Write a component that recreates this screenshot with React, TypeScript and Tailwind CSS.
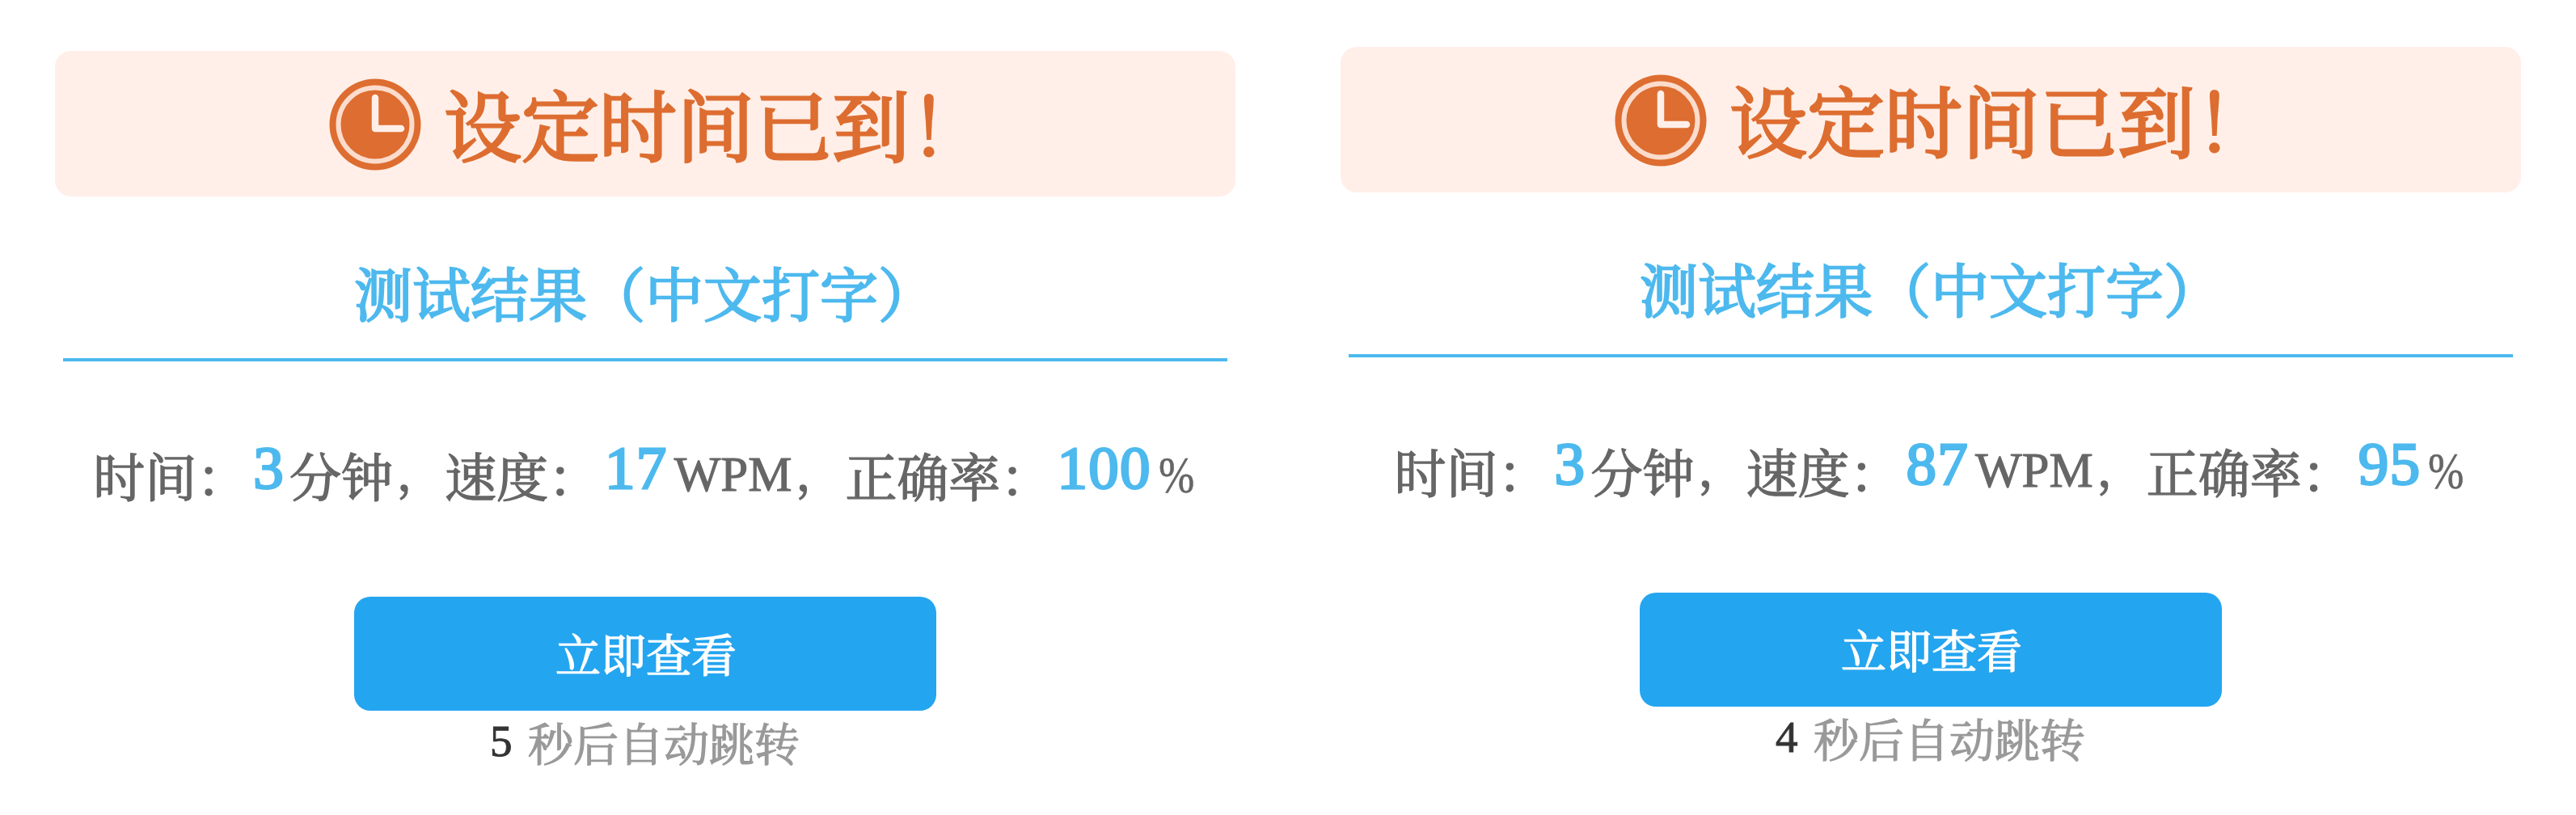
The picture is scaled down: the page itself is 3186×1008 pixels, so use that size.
type Result = {
  minutes: string;
  wpm: string;
  accuracy: string;
  countdown: string;
};

const cjk = "font-['Noto_Serif_CJK_SC','Noto_Sans_CJK_SC',sans-serif]";
const latin = "font-['Liberation_Serif',serif]";

function ClockIcon() {
  return (
    <svg viewBox="0 0 114 114" className="mt-[34px] h-[114px] w-[114px] shrink-0" fill="none">
      <circle cx="57" cy="57" r="56.5" fill="#dd6d30" />
      <circle cx="57" cy="57" r="45.5" stroke="#fbdccd" strokeWidth="6" />
      <path d="M57 24V62H89" stroke="#ffefe8" strokeWidth="8.5" strokeLinecap="round" strokeLinejoin="round" />
    </svg>
  );
}

function Label({ children }: { children: string }) {
  return (
    <span
      className={`${cjk} mt-[8px] text-[64px] leading-[64px] text-[#666] [-webkit-text-stroke:1.4px_#666]`}
    >
      {children}
    </span>
  );
}

function Comma() {
  return (
    <span
      className={`${cjk} mt-[8px] w-[64px] pl-[5px] text-[56px] leading-[56px] text-[#666] [-webkit-text-stroke:1.6px_#666]`}
    >
      ，
    </span>
  );
}

function Figure({ children }: { children: string }) {
  return (
    <span
      className={`${latin} ml-[6px] mr-[6px] mt-[-6px] text-[75px] leading-[78px] tracking-[1.3px] text-[#4db9ee] [-webkit-text-stroke:2.8px_#4db9ee]`}
    >
      {children}
    </span>
  );
}

function ResultPanel({ result, className }: { result: Result; className: string }) {
  return (
    <section className={`flex w-[1460px] shrink-0 flex-col items-center ${className}`}>
      <header className="flex h-[180px] w-full items-start rounded-[20px] bg-[#ffefe8] pl-[339px]">
        <ClockIcon />
        <h1
          className={`${cjk} ml-[28px] mt-[40px] text-[96px] leading-[96px] text-[#dd6d30] [-webkit-text-stroke:3px_#dd6d30]`}
        >
          设定时间已到！
        </h1>
      </header>

      <h2
        className={`${cjk} mt-[81px] h-[119px] w-[1440px] text-center text-[72px] leading-[72px] text-[#4db9ee] [-webkit-text-stroke:2.4px_#4db9ee]`}
      >
        测试结果（中文打字）
      </h2>
      <hr className="h-[4px] w-[1440px] border-0 bg-[#4db9ee]" />

      <div className="mt-[99px] flex h-[192px] items-start justify-center whitespace-nowrap">
        <Label>时间：</Label>
        <Figure>{result.minutes}</Figure>
        <Label>分钟</Label>
        <Comma />
        <Label>速度：</Label>
        <Figure>{result.wpm}</Figure>
        <span
          className={`${latin} ml-[2px] mt-[9px] text-[61px] leading-[64px] text-[#666] [-webkit-text-stroke:1px_#666]`}
        >
          WPM
        </span>
        <Comma />
        <span className="w-[2px]" />
        <Label>正确率：</Label>
        <Figure>{result.accuracy}</Figure>
        <span
          className={`${latin} ml-[3px] mt-[10px] w-[48px] origin-left scale-x-[0.83] text-[64px] leading-[64px] text-[#666] [-webkit-text-stroke:0.6px_#666]`}
        >
          %
        </span>
      </div>

      <button
        className={`${cjk} flex h-[141px] w-[720px] items-center justify-center rounded-[20px] bg-[#24a5f0] pb-[4px] pl-[2px] text-[56px] leading-none text-white [-webkit-text-stroke:1.4px_#fff]`}
      >
        立即查看
      </button>

      <p className="mt-[10px] flex w-[720px] items-start pl-[168px] text-[56px] leading-[56px]">
        <span className={`${latin} w-[47px] text-[55px] text-[#333] [-webkit-text-stroke:1px_#333]`}>
          {result.countdown}
        </span>
        <span className={`${cjk} text-[#999] [-webkit-text-stroke:1.2px_#999]`}>秒后自动跳转</span>
      </p>
    </section>
  );
}

export default function App() {
  return (
    <main className="flex h-[1008px] w-[3186px] items-start gap-[130px] overflow-hidden bg-white pl-[68px]">
      <ResultPanel
        className="pt-[63px]"
        result={{ minutes: "3", wpm: "17", accuracy: "100", countdown: "5" }}
      />
      <ResultPanel
        className="pt-[58px]"
        result={{ minutes: "3", wpm: "87", accuracy: "95", countdown: "4" }}
      />
    </main>
  );
}
